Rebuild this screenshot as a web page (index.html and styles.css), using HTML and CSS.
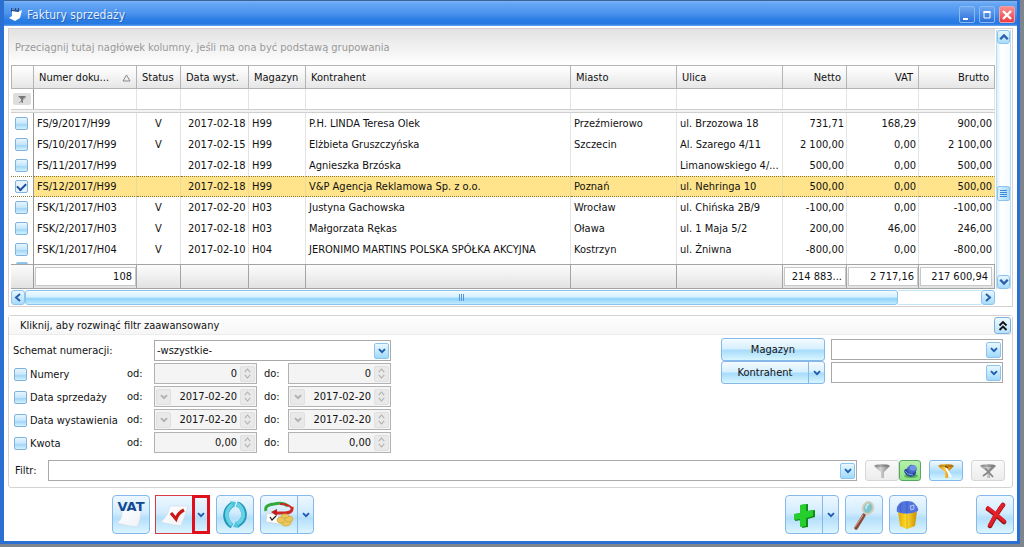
FILE: index.html
```html
<!DOCTYPE html>
<html lang="pl">
<head>
<meta charset="utf-8">
<title>Faktury sprzedaży</title>
<link rel="stylesheet" href="styles.css">
</head>
<body>
<svg class="defs" aria-hidden="true">
  <defs>
    <linearGradient id="gold" x1="0" x2="1"><stop offset="0" stop-color="#c98410"/><stop offset=".4" stop-color="#ffc93c"/><stop offset="1" stop-color="#b06a08"/></linearGradient>
    <linearGradient id="steel" x1="0" x2="1"><stop offset="0" stop-color="#8c8c8c"/><stop offset=".4" stop-color="#d4d4d4"/><stop offset="1" stop-color="#7c7c7c"/></linearGradient>
    <linearGradient id="page" x1="0" x2="1" y1="0" y2="1"><stop offset="0" stop-color="#ffffff"/><stop offset="1" stop-color="#eef2f7"/></linearGradient>
    <linearGradient id="bin" x1="0" x2="1"><stop offset="0" stop-color="#e0a800"/><stop offset=".45" stop-color="#ffdc30"/><stop offset="1" stop-color="#c98c00"/></linearGradient>
    <symbol id="down" viewBox="0 0 8 6"><path d="M1 1.2 4 4.2 7 1.2" fill="none" stroke="currentColor" stroke-width="1.9"/></symbol>
    <symbol id="spin" viewBox="0 0 10 14"><path d="M2 5.5 5 2 8 5.5M2 8.5 5 12 8 8.5" fill="none" stroke="currentColor" stroke-width="1.2"/></symbol>
    <symbol id="funnel" viewBox="0 0 18 16"><path d="M1 3Q2 1 9 1T17 3L11 9V15L8 15V9Z"/><ellipse cx="9" cy="2.800" rx="6.500" ry="1.200" fill="#0003"/></symbol>
  </defs>
</svg>
<div class="window">
  <header class="titlebar">
    <svg class="app-icon" viewBox="0 0 14 15" aria-hidden="true"><path d="M2 1H10V5H2Z" fill="#234f94"/><path d="M3 2H6M7 2H9" stroke="#9ec4f4"/><path d="M3 4 9 5 13 3 11 11 6 14 0 11 3 9Z" fill="#fff"/></svg>
    <h1>Faktury sprzedaży</h1>
    <button class="win-btn" type="button" aria-label="Minimalizuj"><svg viewBox="0 0 16 16"><path d="M4 12H9" stroke="#fff" stroke-width="2"/></svg></button>
    <button class="win-btn" type="button" aria-label="Maksymalizuj"><svg viewBox="0 0 16 16"><path d="M5 5V11H11V5Z" fill="none" stroke="#fff"/><path d="M4.500 5H11.500" stroke="#fff" stroke-width="2"/></svg></button>
    <button class="win-btn win-close" type="button" aria-label="Zamknij okno"><svg viewBox="0 0 16 16"><path d="M4 4 12 12M12 4 4 12" stroke="#fff" stroke-width="2.400"/></svg></button>
  </header>

  <main class="content">
    <section class="grid">
      <div class="grid-top">
        <div class="grid-main">
          <div class="group-panel">Przeciągnij tutaj nagłówek kolumny, jeśli ma ona być podstawą grupowania</div>
          <table class="data">
            <colgroup><col class="c-check"><col class="c-number"><col class="c-status"><col class="c-date"><col class="c-store"><col><col class="c-city"><col class="c-city"><col class="c-net"><col class="c-vat"><col class="c-gross"></colgroup>
            <thead>
              <tr class="head"><th></th><th><span class="sorted">Numer doku...<svg viewBox="0 0 9 8" aria-hidden="true"><path d="M4.500 1 8 7H1Z" fill="none" stroke="#888"/></svg></span></th><th>Status</th><th>Data wyst.</th><th>Magazyn</th><th>Kontrahent</th><th>Miasto</th><th>Ulica</th><th class="num">Netto</th><th class="num">VAT</th><th class="num">Brutto</th></tr>
              <tr class="filter-row"><td><svg class="mini-funnel" viewBox="0 0 18 12" aria-hidden="true"><rect width="18" height="12" rx="2" fill="#dedede"/><path d="M5 3H13L10 6V10L8 9V6Z" fill="#777"/><path d="M6 10 13 4" stroke="#999"/></svg></td><td></td><td></td><td></td><td></td><td></td><td></td><td></td><td></td><td></td><td></td></tr>
              <tr class="divider"><td colspan="11"></td></tr>
            </thead>
            <tbody>
              <tr><td><input type="checkbox" class="tick" aria-label="FS/9/2017/H99"></td><td>FS/9/2017/H99</td><td class="mid">V</td><td class="date">2017-02-18</td><td>H99</td><td>P.H. LINDA Teresa Olek</td><td>Przeźmierowo</td><td>ul. Brzozowa 18</td><td class="num">731,71</td><td class="num">168,29</td><td class="num">900,00</td></tr>
              <tr><td><input type="checkbox" class="tick" aria-label="FS/10/2017/H99"></td><td>FS/10/2017/H99</td><td class="mid">V</td><td class="date">2017-02-15</td><td>H99</td><td>Elżbieta Gruszczyńska</td><td>Szczecin</td><td>Al. Szarego 4/11</td><td class="num">2 100,00</td><td class="num">0,00</td><td class="num">2 100,00</td></tr>
              <tr><td><input type="checkbox" class="tick" aria-label="FS/11/2017/H99"></td><td>FS/11/2017/H99</td><td></td><td class="date">2017-02-18</td><td>H99</td><td>Agnieszka Brzóska</td><td></td><td>Limanowskiego 4/...</td><td class="num">500,00</td><td class="num">0,00</td><td class="num">500,00</td></tr>
              <tr class="selected"><td><input type="checkbox" class="tick" checked aria-label="FS/12/2017/H99"></td><td>FS/12/2017/H99</td><td></td><td class="date">2017-02-18</td><td>H99</td><td>V&amp;P Agencja Reklamowa Sp. z o.o.</td><td>Poznań</td><td>ul. Nehringa 10</td><td class="num">500,00</td><td class="num">0,00</td><td class="num">500,00</td></tr>
              <tr><td><input type="checkbox" class="tick" aria-label="FSK/1/2017/H03"></td><td>FSK/1/2017/H03</td><td class="mid">V</td><td class="date">2017-02-20</td><td>H03</td><td>Justyna Gachowska</td><td>Wrocław</td><td>ul. Chińska 2B/9</td><td class="num">-100,00</td><td class="num">0,00</td><td class="num">-100,00</td></tr>
              <tr><td><input type="checkbox" class="tick" aria-label="FSK/2/2017/H03"></td><td>FSK/2/2017/H03</td><td class="mid">V</td><td class="date">2017-02-18</td><td>H03</td><td>Małgorzata Rękas</td><td>Oława</td><td>ul. 1 Maja 5/2</td><td class="num">200,00</td><td class="num">46,00</td><td class="num">246,00</td></tr>
              <tr><td><input type="checkbox" class="tick" aria-label="FSK/1/2017/H04"></td><td>FSK/1/2017/H04</td><td class="mid">V</td><td class="date">2017-02-10</td><td>H04</td><td>JERONIMO MARTINS POLSKA SPÓŁKA AKCYJNA</td><td>Kostrzyn</td><td>ul. Żniwna</td><td class="num">-800,00</td><td class="num">0,00</td><td class="num">-800,00</td></tr>
              <tr class="cut"><td><span class="cut-tick"></span></td><td></td><td></td><td></td><td></td><td></td><td></td><td></td><td></td><td></td><td></td></tr>
            </tbody>
            <tfoot>
              <tr><td></td><td><span class="sum">108</span></td><td></td><td></td><td></td><td></td><td></td><td></td><td><span class="sum">214 883...</span></td><td><span class="sum">2 717,16</span></td><td><span class="sum last">217 600,94</span></td></tr>
            </tfoot>
          </table>
        </div>
        <div class="vscroll">
          <button type="button" class="sb-btn" aria-label="W górę"><svg viewBox="0 0 8 6" class="flip"><use href="#down"/></svg></button>
          <div class="v-before"></div>
          <div class="v-thumb"><span></span></div>
          <div class="v-after"></div>
          <button type="button" class="sb-btn" aria-label="W dół"><svg viewBox="0 0 8 6"><use href="#down"/></svg></button>
        </div>
      </div>
      <div class="hscroll">
        <button type="button" class="sb-btn" aria-label="W lewo"><svg viewBox="0 0 8 10"><path d="M6 1.500 2 5 6 8.500" fill="none" stroke="currentColor" stroke-width="2"/></svg></button>
        <div class="h-thumb"><span></span></div>
        <div class="h-after"></div>
        <button type="button" class="sb-btn" aria-label="W prawo"><svg viewBox="0 0 8 10"><path d="M2 1.500 6 5 2 8.500" fill="none" stroke="currentColor" stroke-width="2"/></svg></button>
      </div>
    </section>

    <section class="filters">
      <div class="filters-head">
        <h2>Kliknij, aby rozwinąć filtr zaawansowany</h2>
        <button type="button" class="collapse" aria-label="Rozwiń filtr"><svg viewBox="0 0 10 12"><path d="M1.500 5.500 5 2 8.500 5.500M1.500 10 5 6.500 8.500 10" fill="none" stroke="#111" stroke-width="1.800"/></svg></button>
      </div>
      <div class="filters-body">
        <div class="criteria">
          <label for="schema">Schemat numeracji:</label>
          <div class="combo wide"><select id="schema"><option>-wszystkie-</option></select><span class="arrow"><svg><use href="#down"/></svg></span></div>

          <label class="check"><input type="checkbox" class="tick">Numery</label>
          <label for="n1">od:</label>
          <div class="field"><input id="n1" value="0" disabled><span class="spin"><svg><use href="#spin"/></svg></span></div>
          <label for="n2">do:</label>
          <div class="field"><input id="n2" value="0" disabled><span class="spin"><svg><use href="#spin"/></svg></span></div>

          <label class="check"><input type="checkbox" class="tick">Data sprzedaży</label>
          <label for="s1">od:</label>
          <div class="field"><span class="pick"><svg><use href="#down"/></svg></span><input id="s1" value="2017-02-20" disabled><span class="spin"><svg><use href="#spin"/></svg></span></div>
          <label for="s2">do:</label>
          <div class="field"><span class="pick"><svg><use href="#down"/></svg></span><input id="s2" value="2017-02-20" disabled><span class="spin"><svg><use href="#spin"/></svg></span></div>

          <label class="check"><input type="checkbox" class="tick">Data wystawienia</label>
          <label for="w1">od:</label>
          <div class="field"><span class="pick"><svg><use href="#down"/></svg></span><input id="w1" value="2017-02-20" disabled><span class="spin"><svg><use href="#spin"/></svg></span></div>
          <label for="w2">do:</label>
          <div class="field"><span class="pick"><svg><use href="#down"/></svg></span><input id="w2" value="2017-02-20" disabled><span class="spin"><svg><use href="#spin"/></svg></span></div>

          <label class="check"><input type="checkbox" class="tick">Kwota</label>
          <label for="k1">od:</label>
          <div class="field"><input id="k1" value="0,00" disabled><span class="spin"><svg><use href="#spin"/></svg></span></div>
          <label for="k2">do:</label>
          <div class="field"><input id="k2" value="0,00" disabled><span class="spin"><svg><use href="#spin"/></svg></span></div>
        </div>
        <div class="pickers">
          <button type="button" class="push">Magazyn</button>
          <div class="combo"><select aria-label="Magazyn"><option></option></select><span class="arrow"><svg><use href="#down"/></svg></span></div>
          <div class="push split"><button type="button">Kontrahent</button><button type="button" class="drop" aria-label="Więcej: Kontrahent"><svg><use href="#down"/></svg></button></div>
          <div class="combo"><select aria-label="Kontrahent"><option></option></select><span class="arrow"><svg><use href="#down"/></svg></span></div>
        </div>
      </div>
      <div class="filter-line">
        <label for="filtr">Filtr:</label>
        <div class="combo"><select id="filtr"><option></option></select><span class="arrow"><svg><use href="#down"/></svg></span></div>
        <div class="pair">
          <button type="button" class="small off" aria-label="Filtruj"><svg fill="url(#steel)"><use href="#funnel"/></svg></button>
          <button type="button" class="small pinned" aria-label="Przypnij filtr"><svg viewBox="0 0 18 16"><ellipse cx="10" cy="13" rx="7" ry="2" fill="#58b457"/><path d="M3 8Q4 5 7 6L15 8Q16 13 10 14Q4 13 3 8Z" fill="#2c4c9c"/><path d="M6 5 9 2Q13 1 15 4Q17 7 14 9L10 11Q6 9 6 5Z" fill="#4468c4"/><ellipse cx="12" cy="5" rx="3.500" ry="2.800" fill="#6f95e6"/><path d="M4 8Q6 12 12 12" fill="none" stroke="#7f9fe4"/></svg></button>
        </div>
        <button type="button" class="small active" aria-label="Edytuj filtr"><svg viewBox="0 0 18 16" fill="url(#gold)"><use href="#funnel"/><path d="M9 5 14 14" stroke="#fff" stroke-width="2"/><path d="M8 3 11 5" stroke="#704000" stroke-width="1.300"/></svg></button>
        <button type="button" class="small off" aria-label="Usuń filtr"><svg viewBox="0 0 18 16" fill="url(#steel)"><use href="#funnel"/><path d="M4 13Q9 10 14 4M6 5 14 14" fill="none" stroke="#858585" stroke-width="1.800"/></svg></button>
      </div>
    </section>

    <footer class="toolbar">
      <button type="button" class="tool" aria-label="VAT"><svg viewBox="0 0 36 36"><path d="M9 13 28 10Q28 24 24 30Q14 29 4 26Q10 22 9 13Z" fill="url(#page)" stroke="#cfd8e2" stroke-width=".6"/><text x="18" y="14" text-anchor="middle" class="vat-text">VAT</text></svg></button>
      <div class="tool split marked">
        <button type="button" aria-label="Zatwierdź"><svg viewBox="0 0 36 36"><path d="M13 9 31 9Q28 19 24 29Q14 28 4 25Q11 19 13 9Z" fill="url(#page)" stroke="#cfd8e2" stroke-width=".6"/><path d="M14 16 19 22Q21 16 27 13" fill="none" stroke="#c81818" stroke-width="3.200"/></svg></button>
        <button type="button" class="drop" aria-label="Więcej: Zatwierdź"><svg><use href="#down"/></svg></button>
      </div>
      <button type="button" class="tool" aria-label="Odśwież"><svg viewBox="0 0 36 36"><path d="M16 7Q8 12 9 20Q10 26 15 29M20 28Q28 24 27 16Q26 9 20 7" fill="none" stroke="#2796b4" stroke-width="5.500"/><path d="M16 7Q9 12 10 19Q11 25 15 28M20 27Q27 23 26 16Q25 10 20 7" fill="none" stroke="#65d2e8" stroke-width="3.800"/><path d="M13 4 19 5 17 11ZM22 31 16 30 19 24Z" fill="#52c3dc"/></svg></button>
      <div class="tool split">
        <button type="button" aria-label="Płatności"><svg viewBox="0 0 36 36"><path d="M6 16 17 18 19 27 5 25Z" fill="#fff" stroke="#c8c8c8" stroke-width=".6"/><path d="M9 20 11 23 15 19" fill="none" stroke="#222" stroke-width="1.300"/><path d="M5 14Q3 8 13 7Q22 5 27 9" fill="none" stroke="#35a83c" stroke-width="3"/><path d="M31 10Q32 16 24 16H14" fill="none" stroke="#d02828" stroke-width="3"/><path d="M31 11Q27 7 19 7" fill="none" stroke="#d02828" stroke-width="2"/><path d="M16 12V19L10 15Z" fill="#c01c1c"/><g fill="#ebc65a" stroke="#d0a63c" stroke-width=".7"><ellipse cx="25" cy="26" rx="5" ry="3"/><ellipse cx="20" cy="23" rx="4" ry="3"/><ellipse cx="28" cy="22" rx="4" ry="3"/><ellipse cx="24" cy="19" rx="4" ry="2"/></g></svg></button>
        <button type="button" class="drop" aria-label="Więcej: Płatności"><svg><use href="#down"/></svg></button>
      </div>
      <div class="tool split push-right">
        <button type="button" aria-label="Dodaj"><svg viewBox="0 0 36 36"><path d="M15 8 22 7V14L29 13V20L22 22V30L16 31V23L9 24V17L15 16Z" fill="#118a1c"/><path d="M14 8 20 7V14L27 13V19L20 21V29L14 30V22L8 23V17L14 16Z" fill="#27cf2e"/></svg></button>
        <button type="button" class="drop" aria-label="Więcej: Dodaj"><svg><use href="#down"/></svg></button>
      </div>
      <button type="button" class="tool" aria-label="Podgląd"><svg viewBox="0 0 36 36"><path d="M18 18 10 31" stroke="#8a4a38" stroke-width="3.500" stroke-linecap="round"/><path d="M17 18 9 30" stroke="#d59a80" stroke-width="1.200"/><ellipse cx="22" cy="11" rx="5" ry="6" transform="rotate(20 22 11)" fill="#7fc4cc" stroke="#d0cdb8" stroke-width="2"/><path d="M20 12Q20 8 23 7" fill="none" stroke="#c8eef0" stroke-width="1.500"/></svg></button>
      <button type="button" class="tool" aria-label="Usuń"><svg viewBox="0 0 36 36"><path d="M8 14 17 17 27 14 25 29 17 32 10 29Z" fill="url(#bin)"/><path d="M17 17V32" stroke="#d09a00" stroke-width=".7"/><path d="M7 15Q6 10 9 7Q11 4 17 4Q23 4 25 7Q29 11 28 14Q18 19 7 15Z" fill="#5373dc"/><path d="M11 7Q9 11 11 15M17 5V16" fill="none" stroke="#3f5fc6"/><path d="M20 9 24 8V12L21 13Z" fill="#6482e4" stroke="#c4d2ff" stroke-width=".8"/></svg></button>
      <button type="button" class="tool exit" aria-label="Zamknij"><svg viewBox="0 0 36 36"><path d="M11 12Q18 17 27 25M26 8Q19 17 13 29" fill="none" stroke="#8f1010" stroke-width="4.500" stroke-linecap="round"/><path d="M11 11Q18 16 27 24M26 8Q19 16 13 28" fill="none" stroke="#e3202a" stroke-width="3.600" stroke-linecap="round"/></svg></button>
    </footer>
  </main>
</div>
</body>
</html>
```
FILE: styles.css
```css
* { box-sizing: border-box; }
body {
  margin: 0;
  min-height: 100vh;
  padding: 0 4px 3px 0;
  display: flex;
  background: #7f858c;
  font: 11px/14px "DejaVu Sans Condensed", "DejaVu Sans", sans-serif;
  color: #111;
}
button, input, select { font: inherit; color: inherit; }
button { padding: 0; border: 0; background: none; display: flex; align-items: center; justify-content: center; }
h1, h2 { margin: 0; font-size: inherit; font-weight: normal; }
.defs { position: absolute; width: 0; height: 0; }

.window {
  flex: 1;
  min-width: 0;
  display: flex;
  flex-direction: column;
  border: solid #2c6fd2;
  border-width: 0 3px 3px 4px;
  background: #2c6fd2;
}
.titlebar {
  height: 26px;
  display: flex;
  align-items: center;
  gap: 4px;
  padding: 2px 2px 0 5px;
  border-top: 1px solid #3a6499;
  background: linear-gradient(#7db4f6, #62a5f4 12%, #4b93ee 50%, #2a7de4 75%, #2679e2 92%, #6ba7ef);
}
.titlebar h1 { flex: 1; font-size: 12px; line-height: 16px; color: #e2efff; text-shadow: 1px 1px #2a62b4; }
.app-icon { width: 14px; height: 15px; }
.win-btn { width: 16px; height: 17px; border: 1px solid #8abaf5; border-radius: 2px; background: linear-gradient(#6fa8f0, #2c70d8); }
.win-btn svg { width: 16px; height: 16px; flex: none; }
.win-close { background: linear-gradient(#ff8f8f, #e83e44); border-color: #f0a0a8; }

.content { flex: 1; padding: 2px 3px 7px 4px; background: #fff; display: flex; flex-direction: column; }

.grid { margin-right: 1px; border: 1px solid #d9cfd2; padding: 0 1px 0 0; }
.grid-top { display: flex; }
.grid-main { flex: 1; min-width: 0; }
.group-panel { height: 36px; padding: 12px 6px 0; color: #999; background: linear-gradient(#e2e2e2, #fff); white-space: nowrap; }
.data { width: 100%; padding-left: 2px; table-layout: fixed; border-collapse: separate; border-spacing: 0; }
.c-check { width: 23px; }
.c-number { width: 103px; }
.c-status { width: 44px; }
.c-date { width: 68px; }
.c-store { width: 57px; }
.c-city { width: 106px; }
.c-net { width: 64px; }
.c-vat { width: 72px; }
.c-gross { width: 76px; }
.data th, .data td { padding: 1px 3px 0; text-align: left; font-weight: normal; white-space: nowrap; overflow: hidden; vertical-align: middle; border-right: 1px solid #e4e4e4; }
.data .num { text-align: right; padding-right: 2px; }
.data .mid { text-align: center; }
.data .date { padding-left: 7px; }
.data td:first-child { text-align: center; padding: 0; border-right-color: #999; }
.data .head th { height: 24px; padding: 1px 5px 0; border: solid #b4b4b4; border-width: 1px 1px 1px 0; background: linear-gradient(#fff, #f6f6f6 40%, #e6e6e6); }
.data .head th:first-child { border-left-width: 1px; }
.sorted { display: flex; align-items: center; justify-content: space-between; }
.sorted svg { width: 9px; height: 8px; }
.data .filter-row td { height: 20px; }
.mini-funnel { display: block; width: 18px; height: 12px; margin: 0 auto; }
.data .divider td { height: 4px; border: solid #cfcfcf; border-width: 1px 0; background: #f2f2f2; }
.data tbody td { height: 21px; line-height: 14px; }
.data tbody .selected td { background: #ffe48b; border-top: 1px dotted #8a7838; border-bottom: 1px dotted #8a7838; border-right-color: #eadb9c; }
.data tbody .selected td:first-child { background: #fff; border-right-color: #999; }
.data tbody .cut td { height: 4px; padding: 0; line-height: 0; }
.cut-tick { display: block; width: 12px; height: 2px; margin: 2px auto 0; background: #8fc4e8; border-radius: 2px 2px 0 0; }
.data tfoot td { height: 25px; padding: 0 0 0 1px; border: solid #a4a4a4; border-width: 1px 1px 1px 0; background: linear-gradient(#fcfcfc, #e2e2e2); }
.sum { display: block; height: 19px; padding: 2px 3px; line-height: 14px; text-align: right; background: #fff; border: 1px solid #c8c8c8; }
.sum.last { margin-right: 2px; }

.tick {
  appearance: none;
  display: inline-grid;
  place-items: center;
  flex: none;
  width: 13px;
  height: 13px;
  margin: 0;
  vertical-align: middle;
  border: 1px solid #7fb2dc;
  border-radius: 2px;
  background: linear-gradient(#e8f6ff, #c4e6fb 50%, #a2d6f6 60%, #d4f2ff);
}
.data .tick { margin-right: 1px; }
.tick:checked { background: #e4f3fe; }
.tick:checked::after { content: ""; width: 7px; height: 4px; margin-bottom: 2px; border: solid #1d4f9c; border-width: 0 0 2px 2px; transform: rotate(-45deg); }

.vscroll { width: 15px; margin: 1px 0 0 1px; display: flex; flex-direction: column; background: linear-gradient(90deg, #dceefa, #fff 30%, #f4fbff); border: 1px solid #b8dcf4; border-width: 0 1px; }
.sb-btn { flex: none; height: 14px; color: #285fae; background: linear-gradient(#e8f7ff, #a8dcfa); border: 1px solid #8cc4ee; border-radius: 3px; }
.sb-btn svg { width: 10px; height: 8px; }
.flip { transform: rotate(180deg); }
.v-before { flex: 142; }
.v-after { flex: 74; }
.v-thumb { height: 15px; display: grid; place-items: center; border: 1px solid #8cc4ee; border-radius: 2px; background: linear-gradient(90deg, #d8f1ff, #a8dcfa); }
.v-thumb span { width: 7px; height: 7px; background: repeating-linear-gradient(#3f86d6 0 1px, transparent 1px 2px); }
.hscroll { height: 17px; display: flex; margin: 0 16px 0 2px; padding: 1px 0; background: #fff; }
.hscroll .sb-btn { width: 14px; height: 15px; }
.hscroll .sb-btn svg { width: 8px; height: 11px; }
.h-thumb { flex: 885; display: grid; place-items: center; border: 1px solid #8cc4ee; border-radius: 3px; background: linear-gradient(#f2fbff, #d4f0ff 45%, #8fd2f8 60%, #c4ecff); }
.h-thumb span { width: 6px; height: 7px; margin-bottom: 1px; background: repeating-linear-gradient(90deg, #5796de 0 1px, transparent 1px 2px); }
.h-after { flex: 84; border: solid #c4e4f8; border-width: 1px 0; }

.filters { margin: 8px 1px 0 0; border: 1px solid #d6d2d2; border-radius: 3px; padding-bottom: 6px; }
.filters-head { height: 19px; padding: 1px 1px 0 11px; display: flex; align-items: center; justify-content: space-between; background: linear-gradient(#fff, #f6f6f6); border-bottom: 1px solid #ececec; }
.collapse { width: 17px; height: 17px; border: 1px solid #7fb0dc; border-radius: 3px; background: linear-gradient(#eef9ff, #b8e2fb); }
.collapse svg { width: 10px; height: 12px; }
.filters-body { display: flex; justify-content: space-between; align-items: flex-start; padding: 3px 9px 0 4px; }
.criteria { display: grid; grid-template-columns: 114px 27px 103px 31px 103px; row-gap: 2px; align-items: center; padding-top: 2px; }
.criteria > label:first-child { grid-column: 1 / 3; }
.criteria .wide { grid-column: 3 / 6; }
.criteria label[for="n2"], .criteria label[for="s2"], .criteria label[for="w2"], .criteria label[for="k2"] { padding-left: 7px; }
.check { display: flex; align-items: center; gap: 3px; padding: 2px 0 0 1px; white-space: nowrap; }
.combo { position: relative; height: 21px; border: 1px solid #a9a9a9; background: #fff; }
.combo select { appearance: none; display: block; width: 100%; height: 100%; padding: 0 20px 0 2px; border: 0; background: none; }
.arrow { position: absolute; top: 2px; right: 1px; bottom: 1px; width: 15px; display: grid; place-items: center; pointer-events: none; color: #1f5cb0; border: 1px solid #8cc4ee; border-radius: 2px; background: linear-gradient(#eaf8ff, #9fd9fb); }
.arrow svg, .drop svg { width: 8px; height: 6px; }
.field { height: 21px; display: flex; align-items: center; padding: 0 1px; border: 1px solid #b2b2b2; background: #f4f4f4; }
.field input { flex: 1; min-width: 0; padding: 0 3px 0 0; border: 0; background: none; text-align: right; opacity: 1; color: #111; }
.spin, .pick { width: 15px; height: 16px; display: grid; place-items: center; color: #b0b0b0; background: #e9e9e9; border: 1px solid #e0e0e0; border-radius: 2px; }
.spin svg { width: 9px; height: 13px; }
.pick svg { width: 8px; height: 6px; }

.pickers { display: grid; grid-template-columns: 104px 172px; column-gap: 6px; align-items: center; }
.push { height: 23px; border: 1px solid #86b8ea; border-radius: 3px; background: linear-gradient(#f4fbff, #d8f0ff 45%, #a9dcfb 55%, #d8f6ff); }
.split { display: flex; }
.split > button { flex: 1; }
.split > .drop { flex: none; width: 16px; border-left: 1px solid #86b8ea; color: #1f5cb0; }

.filter-line { display: flex; align-items: center; margin-top: 7px; padding: 0 7px 0 6px; gap: 8px; }
.filter-line label { width: 25px; }
.filter-line .combo { flex: 1; }
.pair { display: flex; }
.small { width: 34px; height: 21px; border: 1px solid #d6d6d6; border-radius: 3px; background: linear-gradient(#fafafa, #ececec); }
.small svg { width: 18px; height: 16px; }
.small.pinned { width: 22px; border-color: #58a860; background: linear-gradient(#b8f0ac, #8ce284); }
.small.active { border-color: #86b8ea; background: linear-gradient(#f4fbff, #a9dcfb 60%, #d8f6ff); }

.toolbar { display: flex; gap: 6px; margin-top: 7px; padding-left: 104px; }
.tool { height: 39px; width: 38px; border: 1px solid #86b8ea; border-radius: 4px; background: linear-gradient(#eef8ff, #d2ecfe 45%, #b4dffb 60%, #dcf5ff); }
.tool svg { width: 36px; height: 36px; }
.tool.split { width: 54px; }
.tool .drop svg { width: 8px; height: 6px; }
.tool.marked { width: 55px; margin-left: -1px; border-color: #d83a44; border-radius: 0; }
.marked > .drop { width: 18px; margin: -1px; border: 3px solid #e0101c; }
.vat-text { font: bold 13px "DejaVu Sans", sans-serif; fill: #12488f; }
.push-right { margin-left: auto; }
.exit { margin-left: 43px; }
```
